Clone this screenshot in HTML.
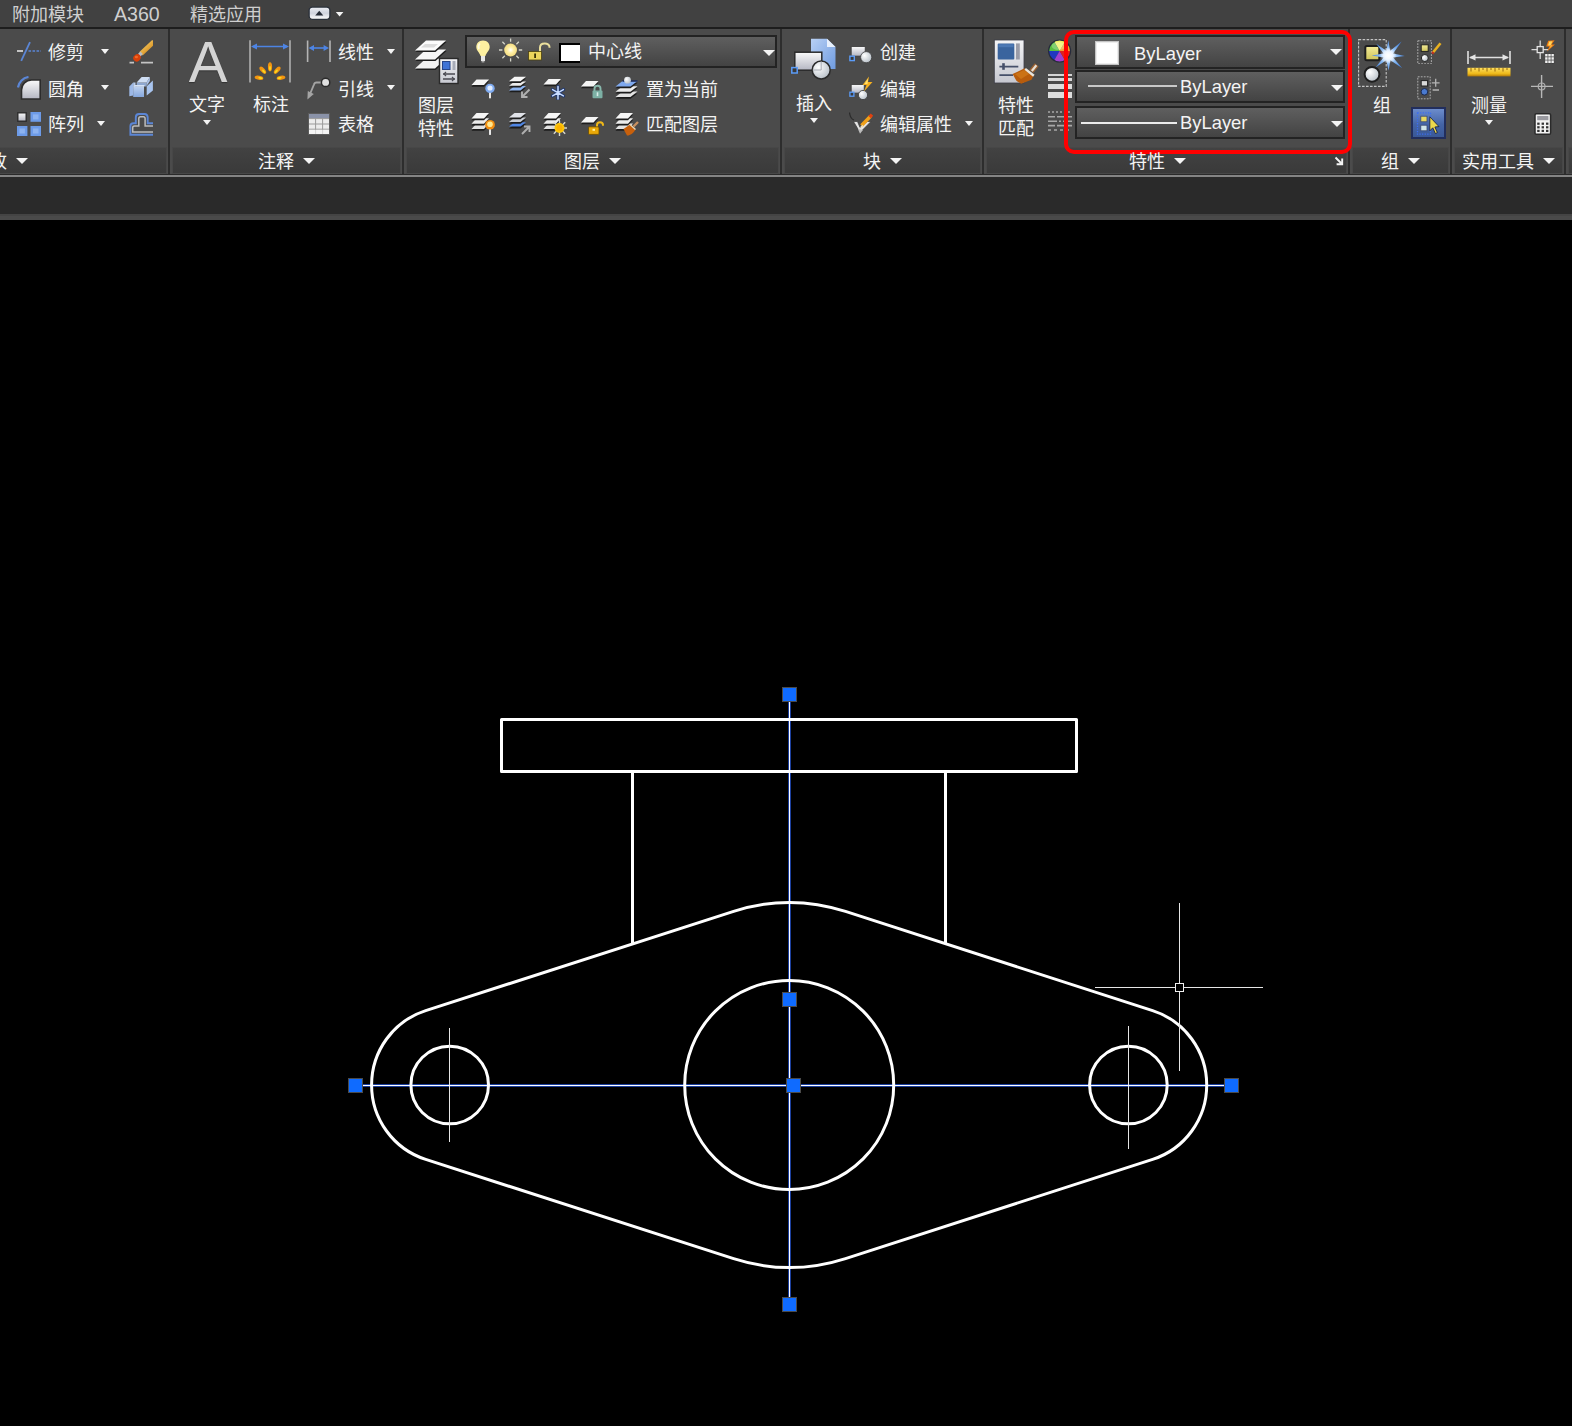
<!DOCTYPE html>
<html lang="zh-CN">
<head>
<meta charset="utf-8">
<title>AutoCAD</title>
<style>
html,body{margin:0;padding:0;}
body{width:1572px;height:1426px;overflow:hidden;background:#000;position:relative;
 font-family:"Liberation Sans","Noto Sans CJK SC",sans-serif;font-size:18px;color:#f2f2f2;}
#app{position:absolute;left:0;top:0;width:1572px;height:1426px;overflow:hidden;background:#000;}
.abs{position:absolute;}
#tabbar{position:absolute;left:0;top:0;width:1572px;height:27px;background:#414141;}
#tabline{position:absolute;left:0;top:27px;width:1572px;height:2px;background:#1d1d1d;}
#ribbon{position:absolute;left:0;top:29px;width:1572px;height:145px;background:#4b4b4b;}
#rline1{position:absolute;left:0;top:174px;width:1572px;height:1px;background:#2a2a2a;}
#rline2{position:absolute;left:0;top:175px;width:1572px;height:2px;background:#848484;}
#darkbar{position:absolute;left:0;top:177px;width:1572px;height:37px;background:#2a2a2a;}
#graystrip{position:absolute;left:0;top:214px;width:1572px;height:6px;background:#4a4a4a;border-top:2px solid #444;box-sizing:border-box;}
.tab{position:absolute;top:1px;height:27px;line-height:29px;font-size:18px;color:#cfcfcf;white-space:nowrap;}
.t{position:absolute;white-space:nowrap;font-size:18px;line-height:24px;height:24px;color:#f4f4f4;}
.sep{position:absolute;top:29px;width:2px;height:145px;background:#2d2d2d;}
.ptitle{position:absolute;top:147px;height:27px;background:linear-gradient(#424242,#3a3a3a);border:1px solid #474747;box-sizing:border-box;}
.arr{position:absolute;width:0;height:0;border-left:4px solid transparent;border-right:4px solid transparent;border-top:5px solid #f4f4f4;}
.arrb{position:absolute;width:0;height:0;border-left:6px solid transparent;border-right:6px solid transparent;border-top:6px solid #f4f4f4;}
.dd{position:absolute;box-sizing:border-box;border:2px solid #232323;background:linear-gradient(#5f5f5f,#434343);}
.by{font-size:18.4px;font-family:"Liberation Sans",sans-serif;}
.ico{position:absolute;}
</style>
</head>
<body>
<div id="app">

<!-- ===== Tab bar ===== -->
<div id="tabbar">
  <div class="tab" style="left:12px;">附加模块</div>
  <div class="tab" style="left:114px;font-size:19.6px;top:0px;">A360</div>
  <div class="tab" style="left:190px;">精选应用</div>
  <svg class="ico" style="left:308px;top:6px;" width="40" height="16" viewBox="0 0 40 16">
    <defs><linearGradient id="gBtn" x1="0" y1="0" x2="0" y2="1"><stop offset="0" stop-color="#eceef4"/><stop offset="0.5" stop-color="#cfd3de"/><stop offset="1" stop-color="#ffffff"/></linearGradient></defs>
    <rect x="1.100" y="1.100" width="20.800" height="12.200" rx="3.200" fill="url(#gBtn)" stroke="#2a303a" stroke-width="1.300"/>
    <path d="M7.200 9.500 L15.300 9.500 L11.250 4.700 Z" fill="#242a36"/>
    <path d="M27.800 6 L35.400 6 L31.600 10.600 Z" fill="#f4f4f4"/>
  </svg>
</div>
<div id="tabline"></div>

<!-- ===== Ribbon ===== -->
<div id="ribbon"></div>
<div id="rline1"></div><div id="rline2"></div>
<div id="darkbar"></div><div id="graystrip"></div>


<!-- panel title backgrounds -->
<div class="ptitle" style="left:-2px;width:169px;"></div>
<div class="ptitle" style="left:172px;width:229px;"></div>
<div class="ptitle" style="left:406px;width:373px;"></div>
<div class="ptitle" style="left:784px;width:197px;"></div>
<div class="ptitle" style="left:986px;width:361px;"></div>
<div class="ptitle" style="left:1352px;width:97px;"></div>
<div class="ptitle" style="left:1454px;width:109px;"></div>
<div class="ptitle" style="left:1568px;width:12px;"></div>
<!-- separators -->
<div class="sep" style="left:168px;"></div>
<div class="sep" style="left:402px;"></div>
<div class="sep" style="left:780px;"></div>
<div class="sep" style="left:982px;"></div>
<div class="sep" style="left:1348px;"></div>
<div class="sep" style="left:1450px;"></div>
<div class="sep" style="left:1564px;"></div>

<!-- ===== Panel: 修改 ===== -->
<div class="t" style="left:48px;top:41px;">修剪</div>
<div class="t" style="left:48px;top:78px;">圆角</div>
<div class="t" style="left:48px;top:113px;">阵列</div>
<div class="arr" style="left:101px;top:49px;"></div>
<div class="arr" style="left:101px;top:85px;"></div>
<div class="arr" style="left:97px;top:121px;"></div>
<div class="t" style="left:-29px;top:150px;">修改</div>
<div class="arrb" style="left:16px;top:158px;"></div>

<svg width="0" height="0" style="position:absolute"><defs>
  <linearGradient id="gLight" x1="0" y1="0" x2="0" y2="1"><stop offset="0" stop-color="#fafafa"/><stop offset="1" stop-color="#b4b6c2"/></linearGradient>
  <linearGradient id="gBlue" x1="0" y1="0" x2="0" y2="1"><stop offset="0" stop-color="#8db3f0"/><stop offset="1" stop-color="#5a8add"/></linearGradient>
  <linearGradient id="gBlue2" x1="0" y1="0" x2="0" y2="1"><stop offset="0" stop-color="#bcd0ee"/><stop offset="1" stop-color="#86a8de"/></linearGradient>
  <linearGradient id="gBrush" x1="0" y1="0" x2="1" y2="1"><stop offset="0" stop-color="#ffd870"/><stop offset="1" stop-color="#c87808"/></linearGradient>
  <linearGradient id="gA" x1="0" y1="0" x2="0" y2="1"><stop offset="0" stop-color="#e6e6e6"/><stop offset="1" stop-color="#bdbdbd"/></linearGradient>
  <radialGradient id="gBall" cx="0.35" cy="0.35" r="0.7"><stop offset="0" stop-color="#ffffff"/><stop offset="1" stop-color="#b8c0c8"/></radialGradient>
  <linearGradient id="gYel" x1="0" y1="0" x2="0" y2="1"><stop offset="0" stop-color="#f4ec98"/><stop offset="1" stop-color="#cfc45a"/></linearGradient>
  <linearGradient id="gRuler" x1="0" y1="0" x2="0" y2="1"><stop offset="0" stop-color="#ffe060"/><stop offset="0.7" stop-color="#eeb818"/><stop offset="1" stop-color="#b07808"/></linearGradient>
  <linearGradient id="gDoc" x1="0" y1="0" x2="1" y2="1"><stop offset="0" stop-color="#b8d0f4"/><stop offset="1" stop-color="#6f9be0"/></linearGradient>
  <linearGradient id="gPanel" x1="0" y1="0" x2="0" y2="1"><stop offset="0" stop-color="#f4f4f6"/><stop offset="1" stop-color="#c6c8d0"/></linearGradient>
  <radialGradient id="gStar" cx="0.5" cy="0.5" r="0.5"><stop offset="0" stop-color="#ffffff"/><stop offset="0.45" stop-color="#e4f0ff"/><stop offset="1" stop-color="#6aa0e8" stop-opacity="0"/></radialGradient>
</defs></svg>
<!-- trim -->
<svg class="ico" style="left:17px;top:40px;" width="24" height="24" viewBox="0 0 24 24">
  <rect x="0" y="10" width="6" height="2" fill="#c4c4c4"/>
  <path d="M4.2 20.8 L13 2.2" stroke="#5b86d6" stroke-width="1.8" fill="none"/>
  <path d="M11.5 11 H24" stroke="#5b86d6" stroke-width="1.6" stroke-dasharray="2.6 1.4" fill="none"/>
</svg>
<!-- fillet -->
<svg class="ico" style="left:17px;top:76px;" width="24" height="24" viewBox="0 0 24 24">
  <path d="M4.5 23 V14 A10 10 0 0 1 14.5 4 H23.2 V23 Z" fill="url(#gLight)" stroke="#2c2c2c" stroke-width="1.6"/>
  <path d="M1 11.5 A12.5 12.5 0 0 1 11.5 1" stroke="#5b86d6" stroke-width="2.2" fill="none"/>
</svg>
<!-- array -->
<svg class="ico" style="left:17px;top:112px;" width="24" height="24" viewBox="0 0 24 24">
  <rect x="0.8" y="0.8" width="8.4" height="8.4" fill="url(#gLight)" stroke="#2c2c2c" stroke-width="1.4"/>
  <rect x="13.5" y="0" width="10.5" height="9.8" fill="#6d9be8"/><rect x="16" y="2.4" width="5.5" height="5" fill="#8db3f0"/>
  <rect x="0" y="14" width="10.4" height="10" fill="#6d9be8"/><rect x="2.5" y="16.5" width="5.4" height="5" fill="#8db3f0"/>
  <rect x="13.5" y="14" width="10.5" height="10" fill="#6d9be8"/><rect x="16" y="16.5" width="5.5" height="5" fill="#8db3f0"/>
</svg>
<!-- erase brush -->
<svg class="ico" style="left:129px;top:40px;" width="24" height="24" viewBox="0 0 24 24">
  <path d="M0.5 22.6 H5 M12 22.6 H24.5" stroke="#c4c4c4" stroke-width="1.8"/>
  <path d="M12 13.8 L25 1.6" stroke="url(#gBrush)" stroke-width="4.8"/>
  <path d="M10.2 15.2 L12.6 12.8" stroke="#b8bcc4" stroke-width="3.6"/>
  <ellipse cx="8" cy="17.8" rx="3.9" ry="3.4" transform="rotate(-40 8 17.8)" fill="#d8400a"/>
  <ellipse cx="7.4" cy="17" rx="1.6" ry="1.2" fill="#f06a28"/>
</svg>
<!-- explode boxes -->
<svg class="ico" style="left:129px;top:76px;" width="24" height="24" viewBox="0 0 24 24">
  <path d="M7.700 6.500 H17.500 V10.500 H7.700 Z" fill="#8fa8d0"/>
  <path d="M7.700 6.500 L12.600 1.100 H20.900 L17.500 6.500 Z" fill="#cfdef4"/>
  <path d="M17.500 6.500 L20.900 1.100 V5 L17.500 10 Z" fill="#a9c0e6"/>
  <path d="M0.300 10.500 L4.200 6.500 V19.500 L0.300 20.200 Z" fill="#9cb8e6"/>
  <path d="M4.200 6.500 L6.500 6.500 L6.500 10.700 L4.200 10.700 Z" fill="#b8ccec"/>
  <path d="M17.700 10.200 L23.900 4.500 V14.600 L17.700 19.600 Z" fill="#a8c4ee"/>
  <rect x="4.200" y="10.700" width="10.800" height="10.300" fill="url(#gBlue2)"/>
  <path d="M4.200 10.700 L5.800 9 H15.800 L15 10.700 Z" fill="#d4e2f6"/>
</svg>
<!-- offset -->
<svg class="ico" style="left:129px;top:112px;" width="24" height="24" viewBox="0 0 24 24">
  <path d="M25 11.200 H18.700 V5.500 Q18.700 2 15.500 2 H10 Q6.800 2 6.800 5.500 V11.200 H4.500 Q1.400 11.200 1.400 14.200 V22.800 H25" fill="none" stroke="#5b86d6" stroke-width="1.900"/>
  <path d="M25 14.100 H16.100 V6.600 Q16.100 4.800 14.400 4.800 H11.500 Q9.800 4.800 9.800 6.600 V14.100 H5.500 Q3.700 14.100 3.700 15.800 V20.100 H25" fill="none" stroke="#bcbcbc" stroke-width="1.500"/>
</svg>

<!-- ===== Panel: 注释 ===== -->
<div class="abs" style="left:188px;top:29px;width:40px;height:66px;line-height:66px;font-size:58px;color:#d4d4d4;text-shadow:0 1px 1px #333;text-align:center;font-family:'Liberation Sans',sans-serif;">A</div>
<div class="t" style="left:189px;top:93px;">文字</div>
<div class="arr" style="left:203px;top:120px;"></div>
<div class="t" style="left:253px;top:93px;">标注</div>
<div class="t" style="left:338px;top:41px;">线性</div>
<div class="t" style="left:338px;top:78px;">引线</div>
<div class="t" style="left:338px;top:113px;">表格</div>
<div class="arr" style="left:387px;top:49px;"></div>
<div class="arr" style="left:387px;top:85px;"></div>
<div class="t" style="left:258px;top:150px;">注释</div>
<div class="arrb" style="left:303px;top:158px;"></div>
<!-- dimension big -->
<svg class="ico" style="left:248px;top:39px;" width="44" height="46" viewBox="0 0 44 46">
  <path d="M2 1.300 V43.400 M42 1.300 V43.400" stroke="#bcbcbc" stroke-width="1.400"/>
  <path d="M5 7.5 H39" stroke="#4d84e4" stroke-width="1.6"/>
  <path d="M3 7.5 L9 4.5 V10.5 Z M41 7.5 L35 4.5 V10.5 Z" fill="#4d84e4"/>
  <g fill="#f29410" transform="translate(0 -1.200)">
    <ellipse cx="22" cy="29" rx="2.1" ry="4.6"/>
    <ellipse cx="14.8" cy="32.4" rx="2.1" ry="4.4" transform="rotate(-42 14.8 32.4)"/>
    <ellipse cx="29.2" cy="32.4" rx="2.1" ry="4.4" transform="rotate(42 29.2 32.4)"/>
    <ellipse cx="11" cy="40" rx="2.1" ry="4.4" transform="rotate(-80 11 40)"/>
    <ellipse cx="33" cy="40" rx="2.1" ry="4.4" transform="rotate(80 33 40)"/>
  </g>
  <g fill="#f8d820" transform="translate(0 -1.200)">
    <ellipse cx="22" cy="30.5" rx="1" ry="2.4"/>
    <ellipse cx="15.8" cy="33.5" rx="1" ry="2.2" transform="rotate(-42 15.8 33.5)"/>
    <ellipse cx="28.2" cy="33.5" rx="1" ry="2.2" transform="rotate(42 28.2 33.5)"/>
    <ellipse cx="12.4" cy="40.2" rx="1" ry="2.2" transform="rotate(-80 12.4 40.2)"/>
    <ellipse cx="31.6" cy="40.2" rx="1" ry="2.2" transform="rotate(80 31.6 40.2)"/>
  </g>
</svg>
<!-- linear -->
<svg class="ico" style="left:306px;top:40px;" width="26" height="24" viewBox="0 0 26 24">
  <path d="M1.6 0.5 V22 M24 0.5 V22" stroke="#b4b4b4" stroke-width="1.6"/>
  <path d="M5 8 H21" stroke="#4d84e4" stroke-width="1.6"/>
  <path d="M2.6 8 L8 5 V11 Z M23 8 L17.6 5 V11 Z" fill="#4d84e4"/>
</svg>
<!-- leader -->
<svg class="ico" style="left:306px;top:76px;" width="26" height="24" viewBox="0 0 26 24">
  <path d="M16 6.5 H10.5 Q8.5 6.5 8 8.5 L4 18" stroke="#a4a4a4" stroke-width="1.9" fill="none"/>
  <path d="M1.4 23.6 L1.8 15 L7.8 18 Z" fill="#a4a4a4"/>
  <circle cx="19.6" cy="6.4" r="4.2" fill="#e0e0e0" stroke="#2c2c2c" stroke-width="1.5"/>
</svg>
<!-- table -->
<svg class="ico" style="left:308px;top:113px;" width="22" height="22" viewBox="0 0 22 22">
  <rect x="0.5" y="0.5" width="21" height="21" fill="#ececec" stroke="#5c5c5c"/>
  <rect x="1" y="1" width="20" height="4.2" fill="#8a92a8"/>
  <path d="M1 5.6 H21 M1 11 H21 M1 16.2 H21" stroke="#9a9a9a" stroke-width="1"/>
  <path d="M7.6 5.6 V21 M14.6 5.6 V21" stroke="#9a9a9a" stroke-width="1"/>
  <rect x="1" y="16.8" width="20" height="4.2" fill="#fafafa" opacity="0.6"/>
</svg>


<!-- ===== Panel: 图层 ===== -->
<div class="t" style="left:418px;top:94px;">图层</div>
<div class="t" style="left:418px;top:117px;">特性</div>
<div class="dd" style="left:465px;top:35px;width:312px;height:33px;"></div>
<div class="abs" style="left:559px;top:43px;width:21px;height:20px;background:#fff;border:2px solid #000;border-right:none;box-sizing:border-box;"></div>
<div class="t" style="left:588px;top:40px;">中心线</div>
<div class="arrb" style="left:763px;top:50px;"></div>
<div class="t" style="left:646px;top:78px;">置为当前</div>
<div class="t" style="left:646px;top:113px;">匹配图层</div>
<div class="t" style="left:564px;top:150px;">图层</div>
<div class="arrb" style="left:609px;top:158px;"></div>

<!-- layer properties big -->
<svg class="ico" style="left:413px;top:38px;" width="46" height="48" viewBox="0 0 46 48">
  <g>
    <path d="M13 20.5 H33 L22 30.5 H2 Z" fill="#1e1e1e" transform="translate(0.5 1.5)"/>
    <path d="M13 20.5 H33 L22 30.5 H2 Z" fill="#f2f2f2"/>
    <path d="M13 11.5 H33 L22 21.5 H2 Z" fill="#1e1e1e" transform="translate(0.5 1.5)"/>
    <path d="M13 11.5 H33 L22 21.5 H2 Z" fill="#f6f6f6"/>
    <path d="M13 2.5 H33 L22 12.5 H2 Z" fill="#1e1e1e" transform="translate(0.5 1.5)"/>
    <path d="M13 2.5 H33 L22 12.5 H2 Z" fill="#fbfbfb"/>
    <path d="M12 6 H25 L21 9.5 H8 Z" fill="#dcdcdc"/>
  </g>
  <rect x="26.5" y="20.5" width="18.5" height="25" fill="url(#gPanel)" stroke="#2a2a2a" stroke-width="1.4"/>
  <rect x="29.5" y="23.5" width="7.5" height="8" fill="#3f73d6" stroke="#27458a" stroke-width="1"/>
  <rect x="39.5" y="23" width="3" height="9" fill="#a8acb8"/>
  <path d="M30 36 H42 M30 41 H42" stroke="#4a4a52" stroke-width="1.3"/>
  <path d="M33 34 L31 36 L33 38 M39 39 L41 41 L39 43" stroke="#4a4a52" stroke-width="1.2" fill="none"/>
</svg>
<!-- layer dropdown state icons -->
<svg class="ico" style="left:474px;top:38px;" width="80" height="28" viewBox="0 0 80 28">
  <!-- bulb -->
  <path d="M9 2.5 C4.5 2.5 2.3 5.8 2.3 9 C2.3 12.6 5.6 14.6 6.6 18 H11.4 C12.4 14.6 15.7 12.6 15.7 9 C15.7 5.8 13.5 2.5 9 2.5 Z" fill="#fdf0a0"/>
  <path d="M6 5.5 C4.5 7 4.2 9.5 5 11" stroke="#fffbe0" stroke-width="1.6" fill="none"/>
  <rect x="7" y="18" width="4" height="5" fill="#e8e8e8"/>
  <rect x="7.6" y="23" width="2.8" height="1.5" fill="#a0a0a0"/>
  <!-- sun -->
  <defs><radialGradient id="gSun" cx="0.5" cy="0.5" r="0.5"><stop offset="0" stop-color="#ffffff"/><stop offset="0.45" stop-color="#fff0a8"/><stop offset="1" stop-color="#f4dc80"/></radialGradient></defs>
  <path d="M44.8 12.0 L48.2 12.0 M42.4 17.8 L44.8 20.2 M36.6 20.2 L36.6 23.6 M30.8 17.8 L28.4 20.2 M28.4 12.0 L25.0 12.0 M30.8 6.2 L28.4 3.8 M36.6 3.8 L36.6 0.4 M42.4 6.2 L44.8 3.8" stroke="#d4d4c8" stroke-width="1.300" fill="none"/>
  <circle cx="36.6" cy="12" r="6.400" fill="url(#gSun)"/>
  <!-- open lock -->
  <path d="M66 14 V9.5 C66 4.200 75.500 4.200 75.500 9 V9.800" stroke="#eadf9c" stroke-width="2" fill="none"/>
  <rect x="54.5" y="13.5" width="13" height="8.5" fill="#ecd45c" stroke="#4a4010" stroke-width="0.8"/>
  <rect x="60.2" y="15.5" width="1.8" height="4.5" fill="#3a3208"/>
</svg>
<svg class="ico" style="left:471px;top:76px;" width="24" height="24" viewBox="0 0 24 24"><path d="M5.5 3.5 H18.0 L13.0 8.9 H0.5 Z" fill="#1c1c1c" transform="translate(0 1.8)"/><path d="M5.5 3.5 H18.0 L13.0 8.9 H0.5 Z" fill="#f4f4f4"/><circle cx="19" cy="12.400" r="4.700" fill="#7eaaf0"/><circle cx="19" cy="12" r="2.600" fill="#e0ecff"/><rect x="18" y="16.800" width="2" height="5.500" fill="#e8e8e8"/></svg>
<svg class="ico" style="left:507px;top:76px;" width="24" height="24" viewBox="0 0 24 24"><path d="M7.5 10.0 H19.0 L13.5 14.4 H2.0 Z" fill="#1c1c1c" transform="translate(0 1.8)"/><path d="M7.5 10.0 H19.0 L13.5 14.4 H2.0 Z" fill="#8db4f0"/><path d="M7.5 5.4 H19.0 L13.5 9.8 H2.0 Z" fill="#1c1c1c" transform="translate(0 1.8)"/><path d="M7.5 5.4 H19.0 L13.5 9.8 H2.0 Z" fill="#ececec"/><path d="M7.5 0.8 H19.0 L13.5 5.2 H2.0 Z" fill="#1c1c1c" transform="translate(0 1.8)"/><path d="M7.5 0.8 H19.0 L13.5 5.2 H2.0 Z" fill="#f6f6f6"/><path d="M22.500 13.500 L15.500 20.500 M15 15.500 V21 H20.500" stroke="#b0b0b0" stroke-width="1.900" fill="none"/></svg>
<svg class="ico" style="left:543px;top:76px;" width="24" height="24" viewBox="0 0 24 24"><path d="M5.5 3.0 H18.0 L13.0 8.4 H0.5 Z" fill="#1c1c1c" transform="translate(0 1.8)"/><path d="M5.5 3.0 H18.0 L13.0 8.4 H0.5 Z" fill="#f4f4f4"/><g stroke="#20386e" stroke-width="3.400" stroke-linecap="round"><path d="M15 10.500 V23 M9.600 13.600 L20.400 19.900 M20.400 13.600 L9.600 19.900"/></g><g stroke="#c8dcff" stroke-width="1.500" stroke-linecap="round"><path d="M15 10.500 V23 M9.600 13.600 L20.400 19.900 M20.400 13.600 L9.600 19.900"/></g></svg>
<svg class="ico" style="left:580px;top:76px;" width="24" height="24" viewBox="0 0 24 24"><path d="M6.0 5.0 H18.5 L13.5 10.4 H1.0 Z" fill="#1c1c1c" transform="translate(0 1.8)"/><path d="M6.0 5.0 H18.5 L13.5 10.4 H1.0 Z" fill="#f4f4f4"/><path d="M14.500 15 V12.500 C14.500 8.800 20.500 8.800 20.500 12.500 V15" stroke="#88b8ac" stroke-width="1.900" fill="none"/><rect x="12.500" y="14.500" width="10" height="7.800" rx="1" fill="#7cb0a4"/><rect x="16.700" y="16.300" width="1.600" height="3.800" fill="#d8ece8"/></svg>
<svg class="ico" style="left:615px;top:76px;" width="24" height="24" viewBox="0 0 24 24"><path d="M7.5 15.6 H22.5 L15.5 21.0 H0.5 Z" fill="#1c1c1c" transform="translate(0 1.8)"/><path d="M7.5 15.6 H22.5 L15.5 21.0 H0.5 Z" fill="#e2e2e2"/><path d="M7.5 10.3 H22.5 L15.5 15.7 H0.5 Z" fill="#1c1c1c" transform="translate(0 1.8)"/><path d="M7.5 10.3 H22.5 L15.5 15.7 H0.5 Z" fill="#ececec"/><path d="M7.5 5.0 H22.5 L15.5 10.4 H0.5 Z" fill="#1c1c1c" transform="translate(0 1.8)"/><path d="M7.5 5.0 H22.5 L15.5 10.4 H0.5 Z" fill="#7ea8ee"/><path d="M7.500 5 H22.500" stroke="#1c2c5c" stroke-width="1.600"/><circle cx="12.500" cy="4.200" r="3.400" fill="url(#gBall)"/></svg>
<svg class="ico" style="left:471px;top:112px;" width="24" height="24" viewBox="0 0 24 24"><path d="M5.5 11.6 H18.0 L13.0 17.0 H0.5 Z" fill="#1c1c1c" transform="translate(0 1.8)"/><path d="M5.5 11.6 H18.0 L13.0 17.0 H0.5 Z" fill="#e2e2e2"/><path d="M5.5 6.3 H18.0 L13.0 11.7 H0.5 Z" fill="#1c1c1c" transform="translate(0 1.8)"/><path d="M5.5 6.3 H18.0 L13.0 11.7 H0.5 Z" fill="#ececec"/><path d="M5.5 1.0 H18.0 L13.0 6.4 H0.5 Z" fill="#1c1c1c" transform="translate(0 1.8)"/><path d="M5.5 1.0 H18.0 L13.0 6.4 H0.5 Z" fill="#f6f6f6"/><circle cx="19" cy="12.800" r="4.900" fill="#f08c10"/><circle cx="19" cy="12.200" r="2.800" fill="#ffe890"/><rect x="18" y="17.400" width="2" height="5.500" fill="#e8e8e8"/></svg>
<svg class="ico" style="left:507px;top:112px;" width="24" height="24" viewBox="0 0 24 24"><path d="M7.5 10.2 H19.0 L13.5 14.6 H2.0 Z" fill="#1c1c1c" transform="translate(0 1.8)"/><path d="M7.5 10.2 H19.0 L13.5 14.6 H2.0 Z" fill="#4f86e4"/><path d="M7.5 5.6 H19.0 L13.5 10.0 H2.0 Z" fill="#1c1c1c" transform="translate(0 1.8)"/><path d="M7.5 5.6 H19.0 L13.5 10.0 H2.0 Z" fill="#c8ccd4"/><path d="M7.5 1.0 H19.0 L13.5 5.4 H2.0 Z" fill="#1c1c1c" transform="translate(0 1.8)"/><path d="M7.5 1.0 H19.0 L13.5 5.4 H2.0 Z" fill="#e0e2e8"/><path d="M15 22 L22 15 M17 14.500 H22.500 V20" stroke="#b0b0b0" stroke-width="1.900" fill="none"/></svg>
<svg class="ico" style="left:543px;top:112px;" width="24" height="24" viewBox="0 0 24 24"><path d="M5.5 11.6 H18.0 L13.0 17.0 H0.5 Z" fill="#1c1c1c" transform="translate(0 1.8)"/><path d="M5.5 11.6 H18.0 L13.0 17.0 H0.5 Z" fill="#e2e2e2"/><path d="M5.5 6.3 H18.0 L13.0 11.7 H0.5 Z" fill="#1c1c1c" transform="translate(0 1.8)"/><path d="M5.5 6.3 H18.0 L13.0 11.7 H0.5 Z" fill="#ececec"/><path d="M5.5 1.0 H18.0 L13.0 6.4 H0.5 Z" fill="#1c1c1c" transform="translate(0 1.8)"/><path d="M5.5 1.0 H18.0 L13.0 6.4 H0.5 Z" fill="#f6f6f6"/><g stroke="#d8d8d0" stroke-width="1.400"><path d="M16.500 8 V24 M8.500 16 H24 M10.800 10.300 L22.200 21.700 M22.200 10.300 L10.800 21.700"/></g><circle cx="16.500" cy="16" r="5" fill="#fcc408"/><circle cx="16.500" cy="16" r="3" fill="#fcb000"/></svg>
<svg class="ico" style="left:580px;top:112px;" width="24" height="24" viewBox="0 0 24 24"><path d="M6.0 5.0 H18.5 L13.5 10.4 H1.0 Z" fill="#1c1c1c" transform="translate(0 1.8)"/><path d="M6.0 5.0 H18.5 L13.5 10.4 H1.0 Z" fill="#f4f4f4"/><path d="M17 15 V13 C17 9.200 23 9.200 23 13 V13.800" stroke="#f0b818" stroke-width="2" fill="none"/><rect x="8.500" y="14.800" width="10.500" height="7.600" rx="1" fill="#e8a808" stroke="#6a4a00" stroke-width="0.800"/><rect x="12.500" y="16.800" width="2.500" height="2" fill="#fff0a0"/></svg>
<svg class="ico" style="left:615px;top:112px;" width="24" height="24" viewBox="0 0 24 24"><path d="M5.5 11.6 H18.0 L13.0 17.0 H0.5 Z" fill="#1c1c1c" transform="translate(0 1.8)"/><path d="M5.5 11.6 H18.0 L13.0 17.0 H0.5 Z" fill="#e2e2e2"/><path d="M5.5 6.3 H18.0 L13.0 11.7 H0.5 Z" fill="#1c1c1c" transform="translate(0 1.8)"/><path d="M5.5 6.3 H18.0 L13.0 11.7 H0.5 Z" fill="#ececec"/><path d="M5.5 1.0 H18.0 L13.0 6.4 H0.5 Z" fill="#1c1c1c" transform="translate(0 1.8)"/><path d="M5.5 1.0 H18.0 L13.0 6.4 H0.5 Z" fill="#f6f6f6"/><path d="M8.500 17 L15 12.500 L20.500 17.500 C18.500 21.500 14.500 23.800 12 23.500 Z" fill="#c8600c"/><path d="M15 12.500 L20.500 17.500" stroke="#e8d8b8" stroke-width="1.400"/><path d="M18.500 14.500 L23 10" stroke="#c89060" stroke-width="2.400"/></svg>

<!-- ===== Panel: 块 ===== -->
<div class="t" style="left:796px;top:92px;">插入</div>
<div class="arr" style="left:810px;top:118px;"></div>
<div class="t" style="left:880px;top:41px;">创建</div>
<div class="t" style="left:880px;top:78px;">编辑</div>
<div class="t" style="left:880px;top:113px;">编辑属性</div>
<div class="arr" style="left:965px;top:121px;"></div>
<div class="t" style="left:863px;top:150px;">块</div>
<div class="arrb" style="left:890px;top:158px;"></div>

<!-- insert big -->
<svg class="ico" style="left:790px;top:38px;" width="48" height="44" viewBox="0 0 48 44">
  <path d="M21 0.8 H37 L45.5 9 V31 H21 Z" fill="url(#gDoc)"/>
  <path d="M37 0.8 L45.5 9 H37 Z" fill="#e8f0fc"/>
  <rect x="4.8" y="14.2" width="27" height="18" fill="url(#gLight)" stroke="#2a2a2a" stroke-width="1.5"/>
  <circle cx="31.2" cy="32" r="9" fill="url(#gBall)" stroke="#2a2a2a" stroke-width="1.5"/>
  <path d="M31.2 23.5 V32 H22.7" stroke="#a8acb4" stroke-width="1" fill="none"/>
  <rect x="1.8" y="29.6" width="5.4" height="5.4" fill="#3a3a3a" stroke="#5b9cf8" stroke-width="1.5"/>
</svg>
<svg class="ico" style="left:849px;top:41px;" width="24" height="24" viewBox="0 0 24 24"><rect x="2.2" y="5.6" width="14" height="9.5" fill="url(#gLight)" stroke="#3a3a3a" stroke-width="0.8"/><circle cx="17.2" cy="16.2" r="5.6" fill="url(#gBall)" stroke="#3a3a3a" stroke-width="0.8"/><rect x="0.9" y="15.2" width="4.4" height="4.4" fill="#3a3a3a" stroke="#5b9cf8" stroke-width="1.4"/></svg>
<svg class="ico" style="left:849px;top:76px;" width="24" height="24" viewBox="0 0 24 24"><rect x="2.2" y="8.6" width="13" height="8.5" fill="url(#gLight)" stroke="#3a3a3a" stroke-width="0.8"/><circle cx="14" cy="19" r="4.6" fill="url(#gBall)" stroke="#3a3a3a" stroke-width="0.8"/><rect x="0.9" y="16.2" width="4" height="4" fill="#3a3a3a" stroke="#5b9cf8" stroke-width="1.3"/><path d="M20 0.5 L13.5 9 H17.5 L15 15.5 L23.5 6 H19 Z" fill="#f6b020"/><path d="M19 2.5 L15.5 8 H18.5" fill="#ffe070"/></svg>
<svg class="ico" style="left:849px;top:112px;" width="24" height="24" viewBox="0 0 24 24"><path d="M0.5 0.5 C1 5 2 7 5 8" stroke="#2a2a2a" stroke-width="1.2" fill="none"/><path d="M4.5 9.5 L11 20.5 L22 9.5 L18 9.5 L11 15.5 L8.5 9.5 Z" fill="#e4e4e4" stroke="#3a3a3a" stroke-width="0.7"/><path d="M9 17 L11 21.8 L14 18" fill="#bdbdbd"/><path d="M12.5 13.5 L21.5 4.2" stroke="#f0a018" stroke-width="3.4"/><path d="M20.6 5.2 L23 2.6" stroke="#e04010" stroke-width="3.4"/><path d="M10.4 16 L13.2 12.8 L14.6 14.2 Z" fill="#f4e0b0"/></svg>


<!-- ===== Panel: 特性 ===== -->
<div class="t" style="left:998px;top:94px;">特性</div>
<div class="t" style="left:998px;top:117px;">匹配</div>
<!--ICONS-PROP-->
<!-- match properties big -->
<svg class="ico" style="left:993px;top:39px;" width="48" height="48" viewBox="0 0 48 48">
  <rect x="1.300" y="1" width="29.700" height="43" fill="url(#gPanel)" stroke="#3c3e48" stroke-width="0.800"/>
  <rect x="4.700" y="4.400" width="16.600" height="16.100" rx="1" fill="#3a649e"/>
  <rect x="5.500" y="5.200" width="15" height="3" fill="#4c78b4"/>
  <rect x="23" y="4.400" width="3.800" height="16.100" fill="#9a9ca8"/>
  <path d="M6.400 27.600 H25.300 M6.400 36.200 H20" stroke="#46506a" stroke-width="1.700"/>
  <path d="M10.500 24.200 V30.800" stroke="#46506a" stroke-width="2.600"/>
  <path d="M19.600 35.100 L31.600 29.300 L40.800 36.200 L38.500 40.800 L28.200 44.800 L23.600 41.900 Z" fill="#b85c0c"/>
  <path d="M22 35.200 L31 31 L36 35 L28 40 Z" fill="#d07818" opacity="0.800"/>
  <path d="M32.200 29.900 L40.800 36.800" stroke="#e8e4dc" stroke-width="2.400"/>
  <path d="M38.400 32.400 L43.700 25.900" stroke="#9a6030" stroke-width="5"/>
  <path d="M38.800 32 L43.400 26.300" stroke="#e8e0d4" stroke-width="2.200"/>
</svg>
<!-- color wheel -->
<svg class="ico" style="left:1047px;top:39px;" width="25" height="25" viewBox="0 0 25 25">
  <g transform="translate(12.6 12)">
    <path d="M0 0 L11 0 A11 11 0 0 0 5.500 -9.530 Z" fill="#f0a030"/>
    <path d="M0 0 L5.500 -9.530 A11 11 0 0 0 -5.500 -9.530 Z" fill="#f0f060"/>
    <path d="M0 0 L-5.500 -9.530 A11 11 0 0 0 -11 0 Z" fill="#58c040"/>
    <path d="M0 0 L-11 0 A11 11 0 0 0 -5.500 9.530 Z" fill="#2038c0"/>
    <path d="M0 0 L-5.500 9.530 A11 11 0 0 0 5.500 9.530 Z" fill="#a040d0"/>
    <path d="M0 0 L5.500 9.530 A11 11 0 0 0 11 0 Z" fill="#e02020"/>
    <circle r="11" fill="none" stroke="#262c3c" stroke-width="1.2"/>
    <ellipse cx="-1" cy="-5" rx="7" ry="4" fill="#fff" opacity="0.25"/>
  </g>
</svg>
<!-- lineweight -->
<div class="abs" style="left:1048px;top:74px;width:24px;height:2px;background:#d4d4d4;"></div>
<div class="abs" style="left:1048px;top:78px;width:24px;height:3px;background:#d8d8d8;"></div>
<div class="abs" style="left:1048px;top:84px;width:24px;height:5px;background:#dcdcdc;"></div>
<div class="abs" style="left:1048px;top:92px;width:24px;height:6px;background:#dedede;"></div>
<!-- linetype -->
<svg class="ico" style="left:1048px;top:110px;" width="24" height="22" viewBox="0 0 24 22">
  <g stroke="#a8a8a8" stroke-width="1.6" fill="none">
    <path d="M0 2 H24" stroke-dasharray="2 2"/>
    <path d="M0 6.800 H24" stroke-dasharray="7 2"/>
    <path d="M0 11.200 H24" stroke-dasharray="9 2 2 2"/>
    <path d="M0 15.600 H24" stroke-dasharray="7 2"/>
    <path d="M0 20 H24" stroke-dasharray="3 3"/>
  </g>
</svg>

<div class="dd" style="left:1075px;top:35px;width:270px;height:34px;"></div>
<div class="dd" style="left:1075px;top:70px;width:270px;height:33px;"></div>
<div class="dd" style="left:1075px;top:106px;width:270px;height:33px;"></div>
<div class="abs" style="left:1095px;top:41px;width:24px;height:24px;background:#fff;border:1px solid #c4c4c4;box-shadow:inset 0 0 0 1px #ededed;box-sizing:border-box;"></div>
<div class="t by" style="left:1134px;top:42px;">ByLayer</div>
<div class="abs" style="left:1088px;top:85px;width:89px;height:2px;background:#c8c8c8;"></div>
<div class="t by" style="left:1180px;top:75px;">ByLayer</div>
<div class="abs" style="left:1081px;top:122px;width:96px;height:2px;background:#ececec;"></div>
<div class="t by" style="left:1180px;top:111px;">ByLayer</div>
<div class="arrb" style="left:1330px;top:49px;"></div>
<div class="arrb" style="left:1331px;top:85px;"></div>
<div class="arrb" style="left:1331px;top:121px;"></div>
<div class="abs" style="left:1064px;top:30px;width:288px;height:124px;border:4px solid #ff0000;border-radius:10px;box-sizing:border-box;"></div>
<div class="t" style="left:1129px;top:150px;">特性</div>
<div class="arrb" style="left:1174px;top:158px;"></div>
<svg class="ico" style="left:1334px;top:156px;" width="10" height="10" viewBox="0 0 10 10"><path d="M1.5 1.5 L8 8 M8.2 2.600 V8.200 H2.600" stroke="#f4f4f4" stroke-width="1.900" fill="none"/></svg>

<!-- ===== Panel: 组 ===== -->
<div class="t" style="left:1373px;top:94px;">组</div>
<div class="abs" style="left:1411px;top:107px;width:35px;height:32px;background:linear-gradient(#6c8ccc,#4464a6 55%,#3a5896);border:2px solid #222e5c;box-sizing:border-box;"></div>
<div class="t" style="left:1381px;top:150px;">组</div>
<div class="arrb" style="left:1408px;top:158px;"></div>

<!-- group big -->
<svg class="ico" style="left:1356px;top:36px;" width="52" height="54" viewBox="0 0 52 54">
  <defs><radialGradient id="gSpike" gradientUnits="userSpaceOnUse" cx="32.3" cy="19.5" r="17"><stop offset="0" stop-color="#ffffff"/><stop offset="0.28" stop-color="#e6f2ff"/><stop offset="0.5" stop-color="#8cbcf4"/><stop offset="1" stop-color="#3f7ed8"/></radialGradient>
  <radialGradient id="gGlow" gradientUnits="userSpaceOnUse" cx="32.3" cy="19.5" r="8"><stop offset="0" stop-color="#ffffff"/><stop offset="0.4" stop-color="#f4f9ff" stop-opacity="0.9"/><stop offset="1" stop-color="#cfe4ff" stop-opacity="0"/></radialGradient></defs>
  <rect x="2.600" y="3.600" width="27.600" height="46.800" fill="none" stroke="#c4c4c4" stroke-width="1.100" stroke-dasharray="2.600 1.400"/>
  <rect x="9.300" y="9.900" width="14" height="14.400" rx="1.500" fill="url(#gYel)" stroke="#1e1e1e" stroke-width="2"/>
  <circle cx="16" cy="38.300" r="7.400" fill="url(#gBall)" stroke="#1e1e1e" stroke-width="2"/>
  <polygon points="20.2,7.8 30.3,14.7 32.3,4.3 34.2,14.7 45.6,5.5 37.1,17.5 48.8,19.9 37.1,21.4 46.3,32.3 34.4,24.2 32.6,34.8 30.3,24.3 19.5,31.6 27.5,21.4 15.7,19.5 27.5,17.6" fill="url(#gSpike)"/>
  <circle cx="32.3" cy="19.5" r="8" fill="url(#gGlow)"/>
</svg>
<svg class="ico" style="left:1416px;top:40px;" width="26" height="24" viewBox="0 0 26 24"><rect x="1.800" y="0.800" width="13.600" height="23" fill="none" stroke="#b8b8b8" stroke-width="0.900" stroke-dasharray="1.800 1.200"/><rect x="5.200" y="4.800" width="7" height="6.600" fill="url(#gYel)" stroke="#222" stroke-width="1"/><circle cx="8.800" cy="18" r="3.500" fill="url(#gBall)" stroke="#222" stroke-width="1"/><path d="M17 12.500 L24.500 3.200" stroke="#e8b020" stroke-width="2.600"/><path d="M16.200 13.600 L17.400 12" stroke="#c03020" stroke-width="2.600"/></svg>
<svg class="ico" style="left:1416px;top:76px;" width="26" height="24" viewBox="0 0 26 24"><rect x="1.800" y="0.800" width="12.400" height="22" fill="none" stroke="#b8b8b8" stroke-width="0.900" stroke-dasharray="1.800 1.200"/><rect x="5.200" y="4.600" width="6.400" height="5.400" fill="#d8d8d8" stroke="#222" stroke-width="1"/><circle cx="8.400" cy="15.800" r="3.300" fill="#4a7ad0" stroke="#1a2a50" stroke-width="1"/><path d="M15.800 6.800 H23.600 M19.700 2.800 V10.800 M16.600 14 H23" stroke="#b4b4b4" stroke-width="1.300"/></svg>
<svg class="ico" style="left:1416px;top:112px;" width="26" height="24" viewBox="0 0 26 24"><rect x="1.500" y="0.800" width="13" height="21.400" fill="none" stroke="#3d6ef0" stroke-width="1.300" stroke-dasharray="1.300 1.300"/><rect x="4.800" y="4.200" width="6.200" height="5.600" fill="#e8d860" stroke="#3a4a70" stroke-width="0.800"/><rect x="4.800" y="13.200" width="6.200" height="5.600" fill="#cfe4e8" stroke="#3a4a70" stroke-width="0.800"/><path d="M13.800 4.800 L13.800 18.800 L16.800 15.800 L19.400 21.600 L21.400 20.600 L18.900 15 L23 14.600 Z" fill="#ecd84c" stroke="#1a2448" stroke-width="0.900"/></svg>


<!-- ===== Panel: 实用工具 ===== -->
<div class="t" style="left:1471px;top:94px;">测量</div>
<div class="arr" style="left:1485px;top:120px;"></div>
<div class="t" style="left:1462px;top:150px;">实用工具</div>
<div class="arrb" style="left:1543px;top:158px;"></div>

<!-- measure big -->
<svg class="ico" style="left:1465px;top:48px;" width="48" height="30" viewBox="0 0 48 30">
  <path d="M3 3 V16 M45 3 V16" stroke="#d0d0d0" stroke-width="1.800"/>
  <path d="M5 9.400 H43" stroke="#e0e0e0" stroke-width="1.500"/>
  <path d="M4 9.400 L10.500 6.200 V12.600 Z M44 9.400 L37.500 6.200 V12.600 Z" fill="#e4e4e4"/>
  <rect x="2.500" y="19.800" width="43" height="8.600" fill="url(#gRuler)"/>
  <g stroke="#8a5c08" stroke-width="0.900"><path d="M6 19.800 V23.500 M10 19.800 V22 M14 19.800 V23.500 M18 19.800 V22 M22 19.800 V23.500 M26 19.800 V22 M30 19.800 V23.500 M34 19.800 V22 M38 19.800 V23.500 M42 19.800 V22"/></g>
</svg>
<svg class="ico" style="left:1531px;top:40px;" width="24" height="24" viewBox="0 0 24 24"><path d="M9.200 0.500 V19 M0.500 9.600 H17.500" stroke="#d8d8d8" stroke-width="1.300"/><rect x="6.200" y="6.600" width="6" height="6" fill="#4b4b4b" stroke="#e4e4e4" stroke-width="1.300"/><path d="M23.600 0.200 L17.200 0.800 L15.200 6.600 H18.400 L16 11.400 L23.900 4.600 H20.600 Z" fill="#f07c10"/><path d="M21.500 1.200 L18.200 1.600 L17 5.400 H20 L18.600 8.200 L21.400 5.600 H19.600 Z" fill="#ffd860"/><rect x="13.700" y="13.500" width="9.600" height="10" fill="#f0f0f0" stroke="#3a3a3a" stroke-width="0.900"/><path d="M13.700 16.800 H23.300 M13.700 20.100 H23.300 M16.900 13.500 V23.500 M20.100 13.500 V23.500" stroke="#555" stroke-width="0.800"/></svg>
<svg class="ico" style="left:1531px;top:75px;" width="24" height="24" viewBox="0 0 24 24"><path d="M10.600 0 V23 M0 11.400 H22" stroke="#b8b8b8" stroke-width="1.400"/><circle cx="10.600" cy="11.400" r="3.400" fill="none" stroke="#b0b0b0" stroke-width="1.200"/></svg>
<svg class="ico" style="left:1531px;top:112px;" width="24" height="24" viewBox="0 0 24 24"><rect x="4" y="1.800" width="15.600" height="20.400" rx="1.300" fill="#f2f2f2" stroke="#2a2a2a" stroke-width="1.500"/><rect x="6.200" y="4" width="11.200" height="4.200" fill="#9a9aa0"/><g fill="#333"><rect x="6.200" y="10.600" width="2.400" height="2.200"/><rect x="10.600" y="10.600" width="2.400" height="2.200"/><rect x="15" y="10.600" width="2.400" height="2.200"/><rect x="6.200" y="14.200" width="2.400" height="2.200"/><rect x="10.600" y="14.200" width="2.400" height="2.200"/><rect x="15" y="14.200" width="2.400" height="2.200"/><rect x="6.200" y="17.800" width="2.400" height="2.200"/><rect x="10.600" y="17.800" width="2.400" height="2.200"/><rect x="15" y="17.800" width="2.400" height="2.200"/></g></svg>



<!-- ===== Drawing ===== -->

<svg class="abs" style="left:0;top:220px;" width="1572" height="1206" viewBox="0 220 1572 1206">
  <g shape-rendering="crispEdges">
    <rect x="788" y="700" width="3" height="600" fill="#1c3f9e"/>
    <rect x="360" y="1084" width="868" height="3" fill="#1c3f9e"/>
  </g>
  <g fill="none" stroke="#fff" stroke-width="3" stroke-linejoin="round" stroke-linecap="butt">
    <rect x="501.5" y="719.5" width="575" height="52"/>
    <path d="M632.5 771.5 V943.5 M945.5 771.5 V943.5"/>
    <path d="M425.7 1010.6 L733.6 911.4 A182.4 182.4 0 0 1 845.5 911.4 L1152.6 1010.6 A78.2 78.2 0 0 1 1152.6 1159.4 L845.5 1258.6 A182.4 182.4 0 0 1 733.6 1258.6 L425.7 1159.4 A78.2 78.2 0 0 1 425.7 1010.6 Z"/>
    <circle cx="789.2" cy="1085" r="104.5"/>
    <circle cx="449.7" cy="1085" r="38.8"/>
    <circle cx="1128.4" cy="1085" r="38.8"/>
  </g>
  <g stroke="#e6e6e6" stroke-width="1" fill="none" shape-rendering="crispEdges">
    <path d="M449.5 1028 V1142 M1128.5 1026 V1149"/>
    <path d="M1179.5 903 V1071 M1095 987.5 H1263"/>
  </g>
  <rect x="1175.5" y="983.5" width="8" height="8" fill="#000" stroke="#f0f0f0" stroke-width="1" shape-rendering="crispEdges"/>
  <!-- selected center lines: white core -->
  <g shape-rendering="crispEdges">
    <rect x="789" y="700" width="1" height="600" fill="#fff"/>
    <rect x="360" y="1085" width="868" height="1" fill="#fff"/>
  </g>
  <g fill="#0f6bff" stroke="#4a4a4a" stroke-width="1" shape-rendering="crispEdges">
    <rect x="782.5" y="687.5" width="14" height="14"/>
    <rect x="782.5" y="992.5" width="14" height="14"/>
    <rect x="786.5" y="1078.5" width="14" height="14"/>
    <rect x="782.5" y="1297.5" width="14" height="14"/>
    <rect x="348.5" y="1078.5" width="14" height="14"/>
    <rect x="1224.5" y="1078.5" width="14" height="14"/>
  </g>
</svg>


</div>
</body>
</html>
